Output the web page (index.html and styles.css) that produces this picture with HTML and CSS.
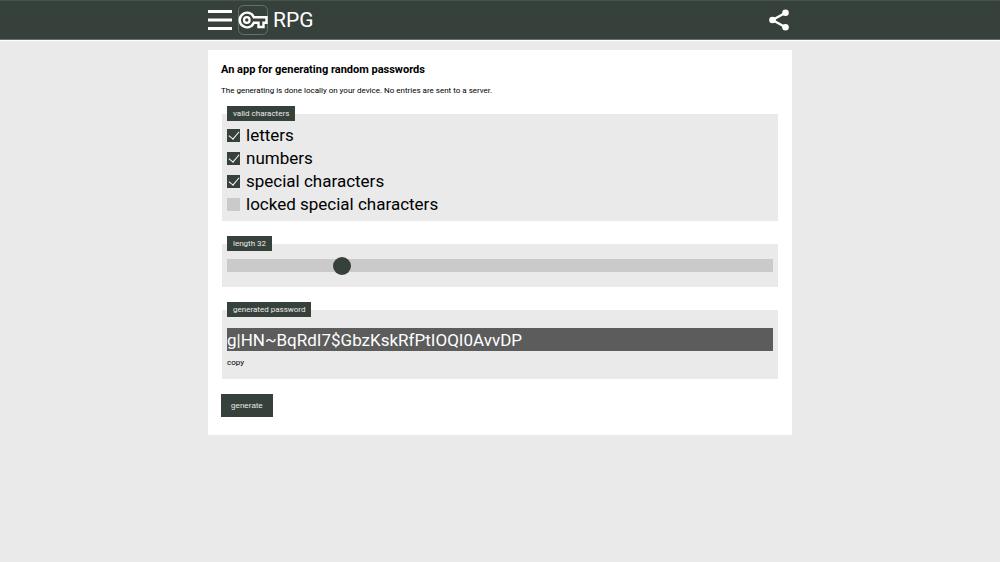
FILE: index.html
```
<!DOCTYPE html>
<html lang="en">
<head>
<meta charset="utf-8">
<title>RPG</title>
<link rel="stylesheet" href="styles.css">
</head>
<body>
<header class="topbar">
  <div class="topbar-inner">
    <button class="icon-button" type="button" aria-label="Menu">
      <svg width="24" height="22" viewBox="0 0 24 22"><path d="M0 2.500h24M0 11h24M0 19.500h24" stroke="#fff" stroke-width="3"/></svg>
    </button>
    <a class="brand" href="#">
      <svg width="30" height="30" viewBox="0 0 30 30" fill="none" stroke="#fff">
        <rect x=".5" y=".5" width="29" height="29" rx="5" stroke="#66716b"/>
        <path d="M15.800 12.300A7.300 7.300 0 1 0 15.800 17.700H20.500V22H25.500V17.700H28.500V12.300Z" stroke-width="2.400"/>
        <circle cx="8.800" cy="15" r="2.800" stroke-width="2.200"/>
      </svg>
      <span>RPG</span>
    </a>
    <button class="icon-button share" type="button" aria-label="Share">
      <svg width="20" height="22" viewBox="0 0 20 22"><path d="M16.500 3.800L3.500 11L16.500 18.200" fill="none" stroke="#fff" stroke-width="2.300"/><g fill="#fff"><circle cx="16.500" cy="3.800" r="3.300"/><circle cx="3.500" cy="11" r="3.300"/><circle cx="16.500" cy="18.200" r="3.300"/></g></svg>
    </button>
  </div>
</header>
<main class="card">
  <h1 class="title">An app for generating random passwords</h1>
  <p class="intro">The generating is done locally on your device. No entries are sent to a server.</p>
  <form class="form">
    <fieldset class="group">
      <legend class="tag">valid characters</legend>
      <div class="options">
        <label class="option"><input class="check" type="checkbox" checked>letters</label>
        <label class="option"><input class="check" type="checkbox" checked>numbers</label>
        <label class="option"><input class="check" type="checkbox" checked>special characters</label>
        <label class="option"><input class="check" type="checkbox">locked special characters</label>
      </div>
    </fieldset>
    <fieldset class="group">
      <legend class="tag">length 32</legend>
      <input class="slider" type="range" min="8" max="128" value="32" aria-label="length">
    </fieldset>
    <fieldset class="group">
      <legend class="tag">generated password</legend>
      <input class="password" type="text" readonly value="g|HN~BqRdI7$GbzKskRfPtIOQI0AvvDP" aria-label="generated password">
      <button class="copy" type="button">copy</button>
    </fieldset>
    <button class="generate" type="button">generate</button>
  </form>
</main>
</body>
</html>
```
FILE: styles.css
```
* { box-sizing: border-box; }
body {
  margin: 0;
  background: #eaeaea;
  color: #000;
  font: 8px/12px Roboto, sans-serif;
}
button, input { font: inherit; color: inherit; border: 0; margin: 0; padding: 0; }
button { background: none; cursor: pointer; }
svg { display: block; }
.topbar {
  background: #37413b;
  border-top: 1px solid #46534c;
  border-bottom: 1px solid #69706c;
  box-shadow: 0 1px 1px #fff;
}
.topbar-inner {
  display: flex;
  align-items: center;
  gap: 6px;
  width: 584px;
  max-width: 100%;
  height: 38px;
  margin: 0 auto;
}
.brand {
  display: flex;
  align-items: center;
  gap: 5px;
  color: #fff;
  font-size: 21px;
  line-height: 24px;
  text-decoration: none;
}
.share { margin-left: auto; margin-right: 3px; }
.card {
  width: 584px;
  max-width: 100%;
  margin: 10px auto;
  padding: 13px 13px 18px;
  background: #fff;
}
.title { margin: 0; font-size: 11px; line-height: 13px; font-weight: 700; }
.intro { margin: 9px 0; }
.group {
  min-width: 0;
  margin: 0 1px 15px;
  padding: 0 5px 5px;
  border: 0;
  background: #eaeaea;
}
.tag {
  padding: 0 6px;
  background: #37413b;
  color: #eaeaea;
  line-height: 15px;
}
.options { padding-top: 3px; }
.option { display: flex; align-items: center; gap: 6px; font-size: 17px; line-height: 23px; }
.check {
  appearance: none;
  display: grid;
  place-items: center;
  width: 13px;
  height: 13px;
  background: #cacaca;
}
.check:checked { background: #37413b; }
.check:checked::after {
  content: "";
  width: 9px;
  height: 5px;
  margin-bottom: 3px;
  border: solid #fff;
  border-width: 0 0 1px 1px;
  transform: rotate(-50deg);
}
.slider {
  appearance: none;
  display: block;
  width: 100%;
  height: 13px;
  margin: 8px 0 10px;
  background: #cacaca;
}
.slider::-webkit-slider-thumb {
  appearance: none;
  width: 18px;
  height: 18px;
  border-radius: 50%;
  background: #37413b;
}
.password {
  display: block;
  width: 100%;
  height: 23px;
  margin: 11px 0 6px;
  background: #5c5c5c;
  color: #fff;
  font-size: 17px;
}
.copy { display: block; margin-bottom: 5px; }
.generate {
  display: block;
  padding: 0 10px;
  background: #37413b;
  color: #eaeaea;
  font-family: "Liberation Sans", Arial, sans-serif;
  line-height: 23px;
}
```
